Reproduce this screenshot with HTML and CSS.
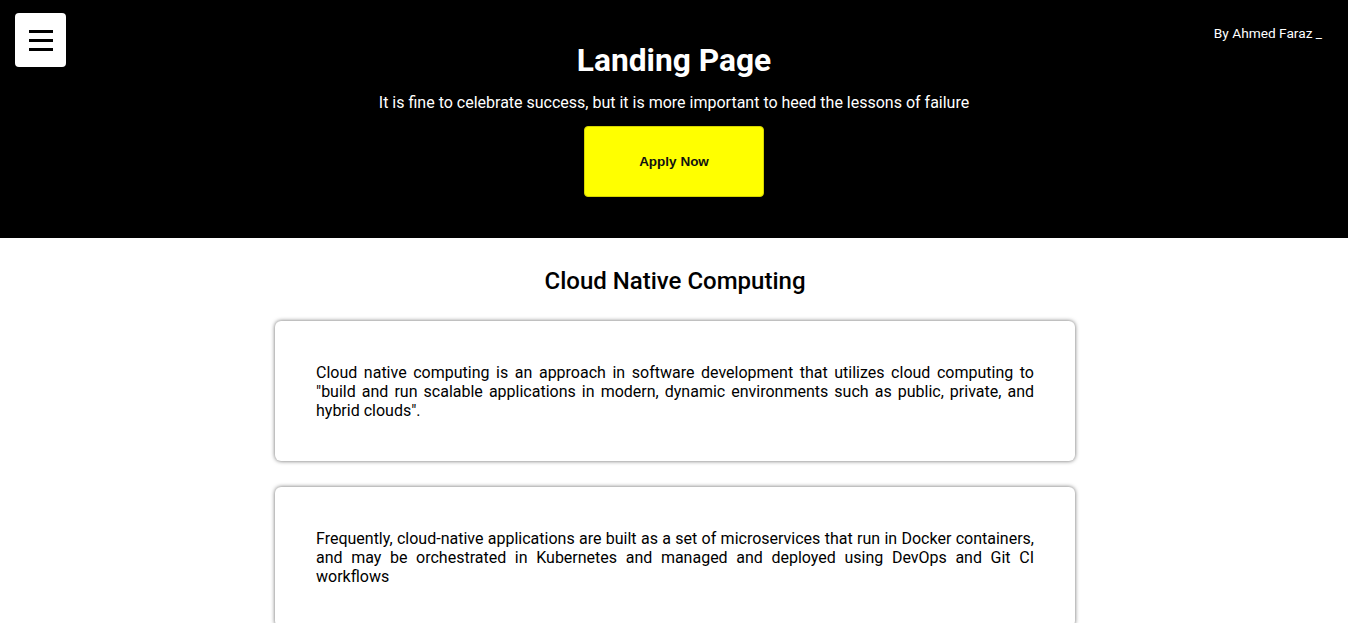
FILE: index.html
```html
<!DOCTYPE html>
<html>
<head>
<meta charset="utf-8">
<title>Landing Page</title>
<link rel="stylesheet" href="styles.css">
</head>
<body>
<header class="hero">
  <div class="hero-top">
    <button class="menu-btn" aria-label="Menu">
      <span class="bar"></span><span class="bar"></span><span class="bar"></span>
    </button>
    <div class="author">By Ahmed Faraz _</div>
  </div>
  <h1 class="title">Landing Page</h1>
  <p class="tagline">It is fine to celebrate success, but it is more important to heed the lessons of failure</p>
  <button class="apply">Apply Now</button>
</header>
<main class="content">
  <h2 class="section-title">Cloud Native Computing</h2>
  <div class="card">
    <p>Cloud native computing is an approach in software development that utilizes cloud computing to "build and run scalable applications in modern, dynamic environments such as public, private, and hybrid clouds".</p>
  </div>
  <div class="card">
    <p>Frequently, cloud-native applications are built as a set of microservices that run in Docker containers, and may be orchestrated in Kubernetes and managed and deployed using DevOps and Git CI workflows</p>
  </div>
</main>
</body>
</html>
```
FILE: styles.css
```css
* { box-sizing: border-box; }
html, body { margin: 0; padding: 0; }
body {
  font-family: Roboto, "Liberation Sans", sans-serif;
  background: #fff;
  color: #000;
}
.hero {
  background: #000;
  color: #fff;
  height: 238px;
  display: flex;
  flex-direction: column;
  align-items: center;
}
.hero-top {
  align-self: stretch;
  display: flex;
  justify-content: space-between;
  align-items: flex-start;
  height: 0;
}
.menu-btn {
  margin: 13px 0 0 15px;
  width: 51px;
  height: 54px;
  background: #fff;
  border: none;
  border-radius: 4px;
  display: flex;
  flex-direction: column;
  align-items: center;
  justify-content: center;
  gap: 6px;
  padding: 0;
}
.bar {
  display: block;
  width: 24px;
  height: 3px;
  background: #000;
}
.author {
  margin: 25px 26px 0 0;
  font-size: 13.7px;
  color: #fff;
}
.title {
  margin: 42px 0 0;
  font-size: 31.7px;
  font-weight: 700;
  line-height: 38px;
}
.tagline {
  margin: 13px 0 0;
  font-size: 16px;
  line-height: 19px;
}
.apply {
  margin-top: 14px;
  width: 180px;
  height: 71px;
  background: #ffff00;
  border: 1px solid #d4d400;
  border-radius: 4px;
  font-family: "Liberation Sans", Arial, sans-serif;
  font-weight: 700;
  font-size: 13.5px;
  color: #111;
}
.content {
  display: flex;
  flex-direction: column;
  align-items: center;
  padding: 0 0 40px 2px;
}
.section-title {
  margin: 29px 0 26px;
  font-size: 24px;
  font-weight: 500;
  line-height: 28px;
}
.card {
  width: 800px;
  min-height: 140px;
  margin-bottom: 26px;
  background: #fff;
  border-radius: 6px;
  box-shadow: 0 0 4px rgba(0, 0, 0, 0.6);
  padding: 42px 41px 40px;
}
.card p {
  margin: 0;
  font-size: 16px;
  line-height: 19px;
  text-align: justify;
}
```
